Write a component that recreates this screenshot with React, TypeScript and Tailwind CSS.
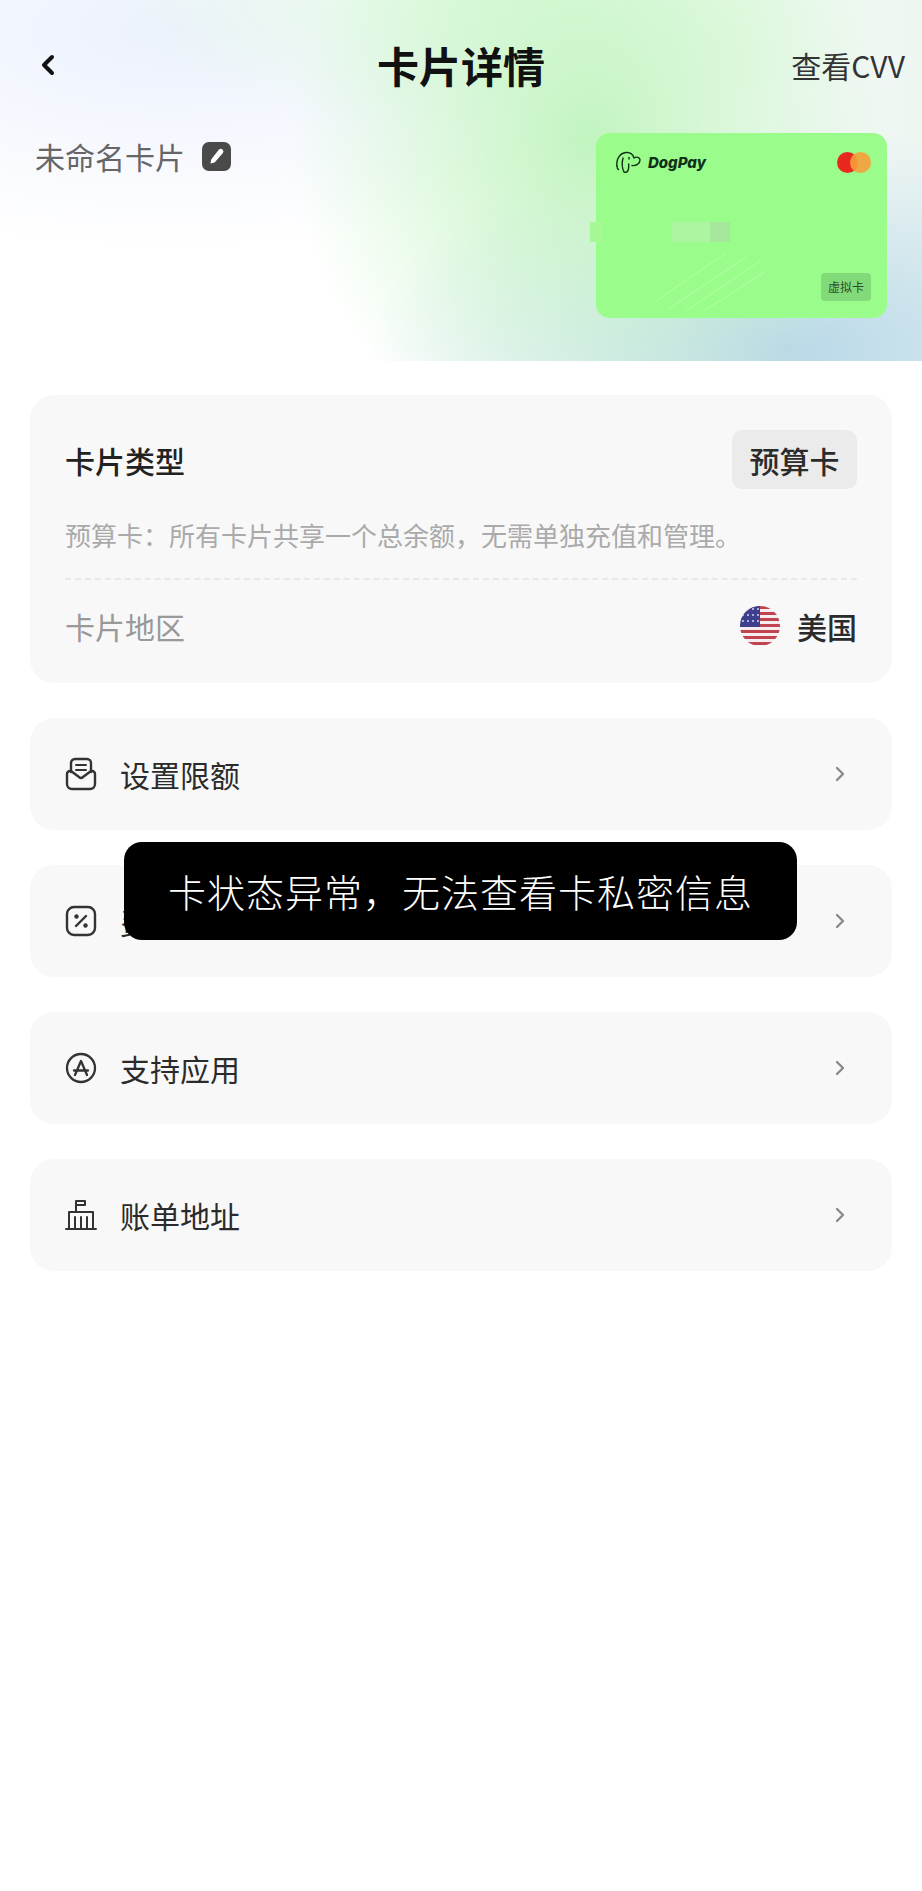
import { ChevronLeft, ChevronRight } from "lucide-react";

const FONT = "font-['Noto_Sans_CJK_SC','Noto_Sans',sans-serif]";

function LimitIcon() {
  return (
    <svg width="32" height="34" viewBox="0 0 32 34" fill="none" stroke="#333" strokeWidth="2.4" strokeLinecap="round" strokeLinejoin="round">
      <path d="M6 15V6a4 4 0 0 1 4-4h12a4 4 0 0 1 4 4v9" />
      <path d="M11 8h10M11 13h10" strokeWidth="2" />
      <path d="M6 14H5a3 3 0 0 0-3 3v10a5 5 0 0 0 5 5h18a5 5 0 0 0 5-5V17a3 3 0 0 0-3-3h-1l-8 6a3 3 0 0 1-4 0z" />
    </svg>
  );
}

function PercentIcon() {
  return (
    <svg width="32" height="32" viewBox="0 0 32 32" fill="none" stroke="#333" strokeWidth="2.4" strokeLinecap="round">
      <rect x="2" y="2" width="28" height="28" rx="7" />
      <path d="M21 11 11 21" />
      <circle cx="11.5" cy="11.5" r="2.2" fill="#333" stroke="none" />
      <circle cx="20.5" cy="20.5" r="2.2" fill="#333" stroke="none" />
    </svg>
  );
}

function AppIcon() {
  return (
    <svg width="32" height="32" viewBox="0 0 32 32" fill="none" stroke="#333" strokeWidth="2.3" strokeLinecap="round" strokeLinejoin="round">
      <circle cx="16" cy="16" r="14" />
      <path d="M10 23 16 9l6 14M9 18.5h14" />
    </svg>
  );
}

function BankIcon() {
  return (
    <svg width="32" height="32" viewBox="0 0 32 32" fill="none" stroke="#333" strokeWidth="2" strokeLinecap="round" strokeLinejoin="round">
      <path d="M1 30h30" />
      <path d="M4 30V13h24v17" />
      <path d="M11 13V2h9v4h-9M10 18v12M16 18v12M22 18v12" />
    </svg>
  );
}

function EditIcon() {
  return (
    <svg width="29" height="29" viewBox="0 0 29 29">
      <rect width="29" height="29" rx="7" fill="#4a4a4a" />
      <path d="M17 7.5a2.6 2.6 0 0 1 3.9 3.4l-7.8 9a3 3 0 0 1-1.4.9l-3.2.8.5-3.3a3 3 0 0 1 .7-1.5z" fill="#fff" />
    </svg>
  );
}

function UsFlag() {
  const stripes = [0, 6, 12, 18, 24, 30, 36];
  const stars = [3, 9, 15];
  return (
    <svg width="40" height="40" viewBox="0 0 40 40">
      <clipPath id="flag-round">
        <circle cx="20" cy="20" r="20" />
      </clipPath>
      <g clipPath="url(#flag-round)">
        <rect width="40" height="40" fill="#f6eeee" />
        {stripes.map((y) => (
          <rect key={y} y={y} width="40" height="3" fill="#c0444f" />
        ))}
        <rect width="20" height="21" fill="#3f3f8f" />
        {stars.map((y) =>
          [3, 8, 13, 18].map((x) => <circle key={`${x}-${y}`} cx={x} cy={y} r="0.9" fill="#e4e4f2" />)
        )}
      </g>
    </svg>
  );
}

function DogLogo() {
  return (
    <svg width="27" height="23" viewBox="0 0 27 23" fill="none" stroke="#10301a" strokeWidth="1.4" strokeLinecap="round" strokeLinejoin="round">
      <path d="M2 15C1 8 5 2 11 1.500c5-.5 7 2 8 5.500 2-1.500 6-1 6 2 0 4-4 6-8 5.500" />
      <path d="M2 15c0 2 .5 3 1.500 3.500" />
      <path d="M8 7c-1 4-1 10 1 14 2 1 4-.5 4.500-3 .3-2 .2-4 .2-5" />
      <path d="M14 6.500v1.500" />
    </svg>
  );
}

function VirtualCard() {
  return (
    <div className="relative h-[185px] w-[291px] rounded-[14px] bg-[#9afd8b]">
      <div className="flex items-center justify-between pl-[19px] pr-[16px] pt-[18px]">
        <div className="flex items-center gap-[6px]">
          <DogLogo />
          <span className="font-['Inter',sans-serif] text-[15px] font-extrabold italic leading-none text-[#10301a]">DogPay</span>
        </div>
        <div className="flex">
          <span className="h-[21px] w-[21px] rounded-full bg-[#e8281f]" />
          <span className="-ml-[8px] h-[21px] w-[21px] rounded-full bg-[#f79e3b]/90" />
        </div>
      </div>
      {/* masked card number */}
      <div className="absolute left-[-6px] top-[89px] h-[20px] w-[12px] bg-[#a4f896]" />
      <div className="absolute left-[76px] top-[89px] h-[20px] w-[38px] bg-[#aef5a2]" />
      <div className="absolute left-[114px] top-[89px] h-[20px] w-[20px] bg-[#a5e89c]" />
      <svg className="absolute left-[60px] top-[118px]" width="110" height="60" viewBox="0 0 110 60" fill="none" stroke="#b4ffa8" strokeWidth="1">
        <path d="M0 50 70 2M12 58 90 6M30 60 104 10M48 60 110 20" />
      </svg>
      <div className="absolute bottom-[17px] right-[16px] flex h-[28px] w-[50px] items-center justify-center rounded-[4px] bg-[#83da78] text-[12px] leading-none text-[#2d4d2c]">
        虚拟卡
      </div>
    </div>
  );
}

function MenuRow({ icon, label }: { icon: React.ReactNode; label: string }) {
  return (
    <div className="flex h-[112px] items-center rounded-[24px] bg-[#f8f8f8] pl-[35px] pr-[40px]">
      <div className="flex w-[32px] items-center justify-center">{icon}</div>
      <span className="ml-[23px] text-[30px] leading-none text-[#2b2b2b]">{label}</span>
      <ChevronRight className="ml-auto text-[#8a8a8a]" size={24} strokeWidth={2.4} />
    </div>
  );
}

export default function App() {
  return (
    <div className={`relative min-h-[1891px] w-[922px] bg-white ${FONT}`}>
      <div className="h-[361px] bg-[radial-gradient(ellipse_300px_320px_at_590px_140px,#c2f4c0_0%,#c2f4c000_100%),radial-gradient(ellipse_420px_220px_at_790px_350px,#b8d8e8_0%,#b8d8e800_100%),radial-gradient(ellipse_420px_130px_at_520px_0px,#e2fbe2_0%,#e2fbe200_100%),radial-gradient(ellipse_520px_220px_at_170px_30px,#ecf1fd_0%,#ecf1fd00_100%),linear-gradient(90deg,#fff_0%,#fff_60%,#eef6f2_100%)]">
        <div className="grid h-[130px] grid-cols-[1fr_auto_1fr] items-center">
          <div className="pl-[32px]">
            <ChevronLeft className="text-[#111]" size={32} strokeWidth={3} />
          </div>
          <h1 className="text-[42px] font-bold leading-none text-[#111]">卡片详情</h1>
          <div className="pr-[17px] text-right text-[30px] leading-none text-[#333]">查看CVV</div>
        </div>
        <div className="flex items-start justify-between pl-[35px] pr-[35px] pt-[3px]">
          <div className="flex items-center gap-[17px] pt-[8px]">
            <span className="text-[30px] leading-none text-[#666]">未命名卡片</span>
            <EditIcon />
          </div>
          <VirtualCard />
        </div>
      </div>

      <div className="flex flex-col gap-[35px] px-[30px] pt-[34px]">
        <div className="h-[288px] rounded-[24px] bg-[#f8f8f8] px-[35px]">
          <div className="flex items-center justify-between pt-[35px]">
            <span className="text-[30px] font-medium leading-none text-[#222]">卡片类型</span>
            <span className="flex h-[59px] w-[125px] items-center justify-center rounded-[10px] bg-[#ebebeb] text-[30px] font-medium leading-none text-[#2b2b2b]">
              预算卡
            </span>
          </div>
          <p className="mt-[32px] text-[26px] leading-[28px] text-[#aaa]">预算卡：所有卡片共享一个总余额，无需单独充值和管理。</p>
          <div className="mt-[29px] border-t-2 border-dashed border-[#e8e8e8]" />
          <div className="mt-[26px] flex items-center justify-between">
            <span className="text-[30px] leading-none text-[#999]">卡片地区</span>
            <div className="flex items-center gap-[17px]">
              <UsFlag />
              <span className="text-[30px] font-medium leading-none text-[#2b2b2b]">美国</span>
            </div>
          </div>
        </div>
        <MenuRow icon={<LimitIcon />} label="设置限额" />
        <MenuRow icon={<PercentIcon />} label="费率说明" />
        <MenuRow icon={<AppIcon />} label="支持应用" />
        <MenuRow icon={<BankIcon />} label="账单地址" />
      </div>

      {/* toast */}
      <div className="absolute left-[124px] top-[842px] flex h-[98px] w-[673px] items-center justify-center rounded-[18px] bg-black text-[38px] font-light leading-none tracking-[1px] text-white">
        卡状态异常，无法查看卡私密信息
      </div>
    </div>
  );
}
